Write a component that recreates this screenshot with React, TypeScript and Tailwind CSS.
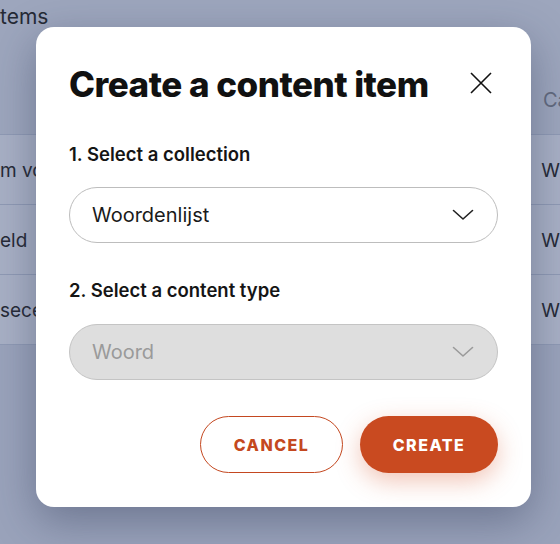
import React from "react";

function Chevron({ className }: { className?: string }) {
  return (
    <svg className={className} width="22" height="12" viewBox="0 0 22 12" fill="none">
      <path d="M1.5 1.5 L11 10 L20.5 1.5" stroke="currentColor" strokeWidth="1.6" strokeLinecap="round" strokeLinejoin="round" />
    </svg>
  );
}

export default function App() {
  const rows = [
    { left: "m vo", right: "W" },
    { left: "eld", right: "W" },
    { left: "sece", right: "W" },
  ];
  return (
    <div className="relative w-[560px] h-[544px] overflow-hidden bg-[#9da6bd]" style={{ fontFamily: "Inter, 'Noto Sans', sans-serif" }}>
      {/* background page */}
      <div className="flex flex-col h-full">
        <div className="h-[34px] pt-[4px] text-[21px] leading-[26px] text-[#252a35]">tems</div>
        <div className="h-[100px] flex items-end pl-[543px] pb-[22px]">
          <span className="text-[20px] leading-[24px] text-[#626a7e] whitespace-nowrap">Ca</span>
        </div>
        <div className="flex flex-col bg-[#a8b0c5] border-t border-[#8f9ab4]">
          {rows.map((r, i) => (
            <div key={i} className="h-[70px] flex items-center pt-[3px] border-b border-[#8f9ab4] text-[19px] text-[#262a36]">
              <span className="w-[543px]">{r.left}</span>
              <span className="whitespace-nowrap">{r.right}</span>
            </div>
          ))}
        </div>
        <div className="flex-1 bg-[#9aa3bb]" />
      </div>

      {/* modal */}
      <div className="absolute left-[36px] top-[27px] w-[495px] h-[480px] bg-white rounded-[18px] shadow-[0_14px_44px_rgba(40,50,80,0.4)] px-[33px] pt-[37px] pb-[34px] flex flex-col">
        <div className="h-[40px] flex items-center justify-between">
          <h1 className="text-[35px] leading-[40px] font-extrabold tracking-[-0.5px] text-[#111]">Create a content item</h1>
          <svg width="22" height="22" viewBox="0 0 22 22" className="mr-[6px] mt-[-3px] text-[#111]">
            <path d="M1 1 L21 21 M21 1 L1 21" stroke="currentColor" strokeWidth="1.6" />
          </svg>
        </div>
        <div className="mt-[38px] text-[18.5px] leading-[24px] font-semibold text-[#151515]">1. Select a collection</div>
        <div className="mt-[21px] h-[56px] rounded-full border border-[#bdbdbd] flex items-center justify-between pl-[22px] pr-[23px]">
          <span className="text-[20px] text-[#1a1a1a]">Woordenlijst</span>
          <Chevron className="text-[#222]" />
        </div>
        <div className="mt-[35px] text-[18.5px] leading-[24px] font-semibold text-[#151515]">2. Select a content type</div>
        <div className="mt-[22px] h-[56px] rounded-full border border-[#c4c4c4] bg-[#dedede] flex items-center justify-between pl-[22px] pr-[23px]">
          <span className="text-[20px] text-[#9a9a9a]">Woord</span>
          <Chevron className="text-[#9a9a9a]" />
        </div>
        <div className="mt-[36px] flex justify-end gap-[17px]">
          <button className="w-[143px] h-[57px] rounded-full border-[1.5px] border-[#c44820] text-[#c44820] text-[16px] font-extrabold tracking-[1.5px]">CANCEL</button>
          <button className="w-[138px] h-[57px] rounded-full bg-[#c94a20] text-white text-[16px] font-extrabold tracking-[1.5px] shadow-[0_8px_24px_rgba(215,90,50,0.35)]">CREATE</button>
        </div>
      </div>
    </div>
  );
}
